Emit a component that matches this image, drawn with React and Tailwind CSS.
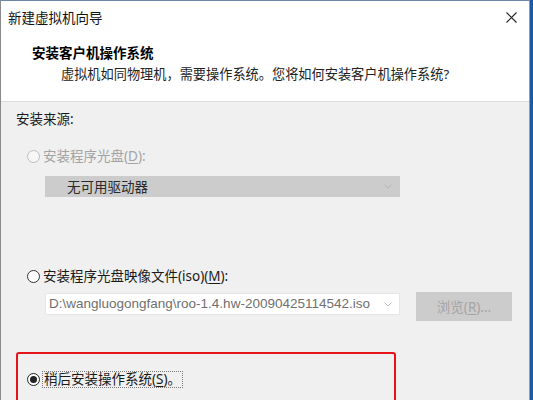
import React from "react";

const FONT = { fontFamily: '"Noto Sans", "Noto Sans CJK SC", sans-serif' };

function Radio({ state }) {
  if (state === "disabled") {
    return <span className="w-[13px] h-[13px] rounded-full border border-[#bdbdbd] bg-[#f7f7f7] shrink-0" />;
  }
  if (state === "checked") {
    return (
      <span className="w-[13px] h-[13px] rounded-full border border-[#222] bg-white shrink-0 flex items-center justify-center">
        <span className="w-[7px] h-[7px] rounded-full bg-[#222]" />
      </span>
    );
  }
  return <span className="w-[13px] h-[13px] rounded-full border border-[#333] bg-white shrink-0" />;
}

function Chevron() {
  return (
    <svg width="8" height="5" viewBox="0 0 8 5" className="shrink-0">
      <path d="M0.5 0.5 L4 4 L7.5 0.5" fill="none" stroke="#b8b8b8" strokeWidth="1" />
    </svg>
  );
}

export default function App() {
  return (
    <div className="w-[533px] h-[400px] bg-[#1d5aa5] overflow-hidden text-[13.5px]" style={FONT}>
      <div className="w-[530px] h-[400px] border-t border-l border-r border-t-[#6d86a8] border-l-[#8a8a8a] border-r-[#9a9a9a] flex flex-col">
        {/* white top area */}
        <div className="bg-white border-b border-[#dcdcdc] h-[101px] flex flex-col shrink-0">
          <div className="h-[33px] flex items-center justify-between pl-[7px] pr-[12px]">
            <span className="text-[#111] leading-[18px] text-[13.5px]">新建虚拟机向导</span>
            <svg width="11" height="11" viewBox="0 0 11 11">
              <path d="M0.5 0.5 L10.5 10.5 M10.5 0.5 L0.5 10.5" stroke="#222" strokeWidth="1.1" />
            </svg>
          </div>
          <div className="pl-[31px] pt-[10px] leading-[18px] font-bold text-black">安装客户机操作系统</div>
          <div className="pl-[60px] pt-[3px] leading-[18px] text-[#222] text-[13.2px] whitespace-nowrap">
            虚拟机如同物理机，需要操作系统。您将如何安装客户机操作系统?
          </div>
        </div>

        {/* body */}
        <div className="flex-1 bg-[#f0f0f0] flex flex-col pt-[8px]">
          <div className="pl-[15px] leading-[18px] text-[#1a1a1a]">安装来源:</div>

          <div className="mt-[19px] ml-[26px] flex items-center gap-[3px] h-[18px]">
            <Radio state="disabled" />
            <span className="text-[#a3a3a3] leading-[18px]">
              安装程序光盘(<span className="underline underline-offset-2">D</span>):
            </span>
          </div>

          <div className="mt-[11px] ml-[44px] w-[355px] h-[21px] bg-[#cccccc] flex items-center justify-between pl-[22px] pr-[8px]">
            <span className="text-[#2a2a2a] leading-[18px]">无可用驱动器</span>
            <Chevron />
          </div>

          <div className="mt-[70px] ml-[26px] flex items-center gap-[3px] h-[18px]">
            <Radio state="normal" />
            <span className="text-[#1a1a1a] leading-[18px]">
              安装程序光盘映像文件(iso)(<span className="underline underline-offset-2">M</span>):
            </span>
          </div>

          <div className="mt-[7px] ml-[44px] flex items-start">
            <div className="mt-px w-[355px] h-[22px] bg-white border border-[#e6e6e6] flex items-center justify-between pl-[3px] pr-[7px] overflow-hidden">
              <span
                className="text-[#6f6f6f] leading-[18px] text-[13.5px] whitespace-nowrap"
                style={{ fontFamily: '"Liberation Sans", Arial, sans-serif' }}
              >
                D:\wangluogongfang\roo-1.4.hw-20090425114542.iso
              </span>
              <Chevron />
            </div>
            <div className="ml-[16px] w-[96px] h-[29px] bg-[#cccccc] flex items-center justify-center">
              <span className="text-[#a4a4a4] leading-[18px]">
                浏览(<span className="underline underline-offset-2">R</span>)...
              </span>
            </div>
          </div>

          <div className="mt-[31px] ml-[15px] w-[380px] h-[80px] border-2 border-[#e5141a] rounded-[3px] pl-[9px] pt-[17px]">
            <div className="flex items-center gap-[2px] h-[17px]">
              <Radio state="checked" />
              <span className="border border-dotted border-[#7a7a7a] leading-[15px] px-[1px] text-[#1a1a1a]">
                稍后安装操作系统(<span className="underline underline-offset-2">S</span>)。
              </span>
            </div>
          </div>
        </div>
      </div>
    </div>
  );
}
